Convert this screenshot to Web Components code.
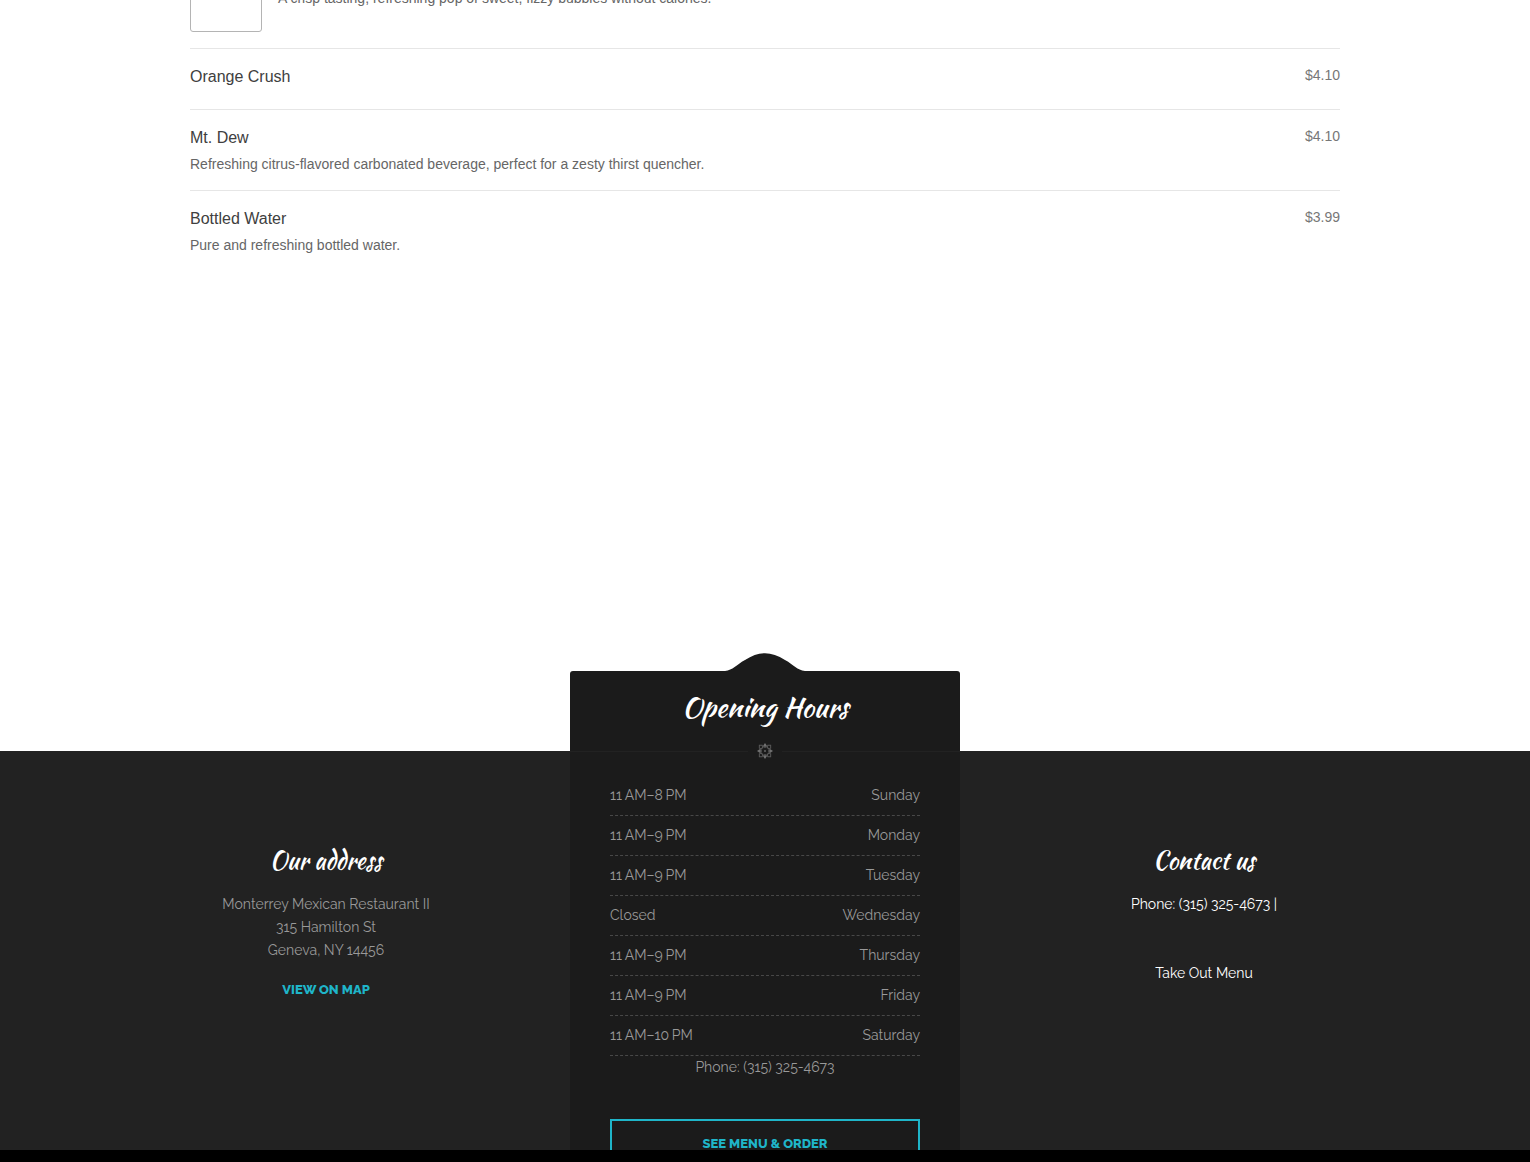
<!DOCTYPE html>
<html lang="en">
<head>
<meta charset="utf-8">
<title>Monterrey Mexican Restaurant II</title>
<style>
	body {
		margin: 0;
		height: 100vh;
		overflow: hidden;
		background: #fff;
	}
</style>
</head>
<body>
<restaurant-page></restaurant-page>

<script>
"use strict";

(function() {
	function attach(el, html) {
		const template = document.createElement('template');
		template.innerHTML = html;
		el.attachShadow({mode: "open"}).appendChild(template.content.cloneNode(true));
	}

	/* One dish or drink: name, description, price and an optional picture frame */
	class MenuItem extends HTMLElement {
		constructor() {
			super();
			attach(this, `
			<style>
				:host {
					display: flex;
					gap: 16px;
					padding: 16px 0;
					border-top: 1px solid #e6e6e6;
					font: 14px/20px "Liberation Sans", Arial, sans-serif;
					color: #666;
				}
				.thumb {
					display: none;
					box-sizing: border-box;
					width: 72px;
					height: 72px;
					border: 1px solid #b4b4b4;
					border-radius: 3px;
				}
				:host([framed]) .thumb {
					display: block;
				}
				.text {
					flex: 1;
				}
				h3 {
					margin: 0 0 4px;
					min-height: 24px;
					font-size: 16px;
					font-weight: normal;
					line-height: 24px;
					color: #404040;
				}
				.price {
					color: #777;
				}
			</style>
			<div class="thumb"></div>
			<div class="text">
				<h3><slot name="name"></slot></h3>
				<slot></slot>
			</div>
			<div class="price"><slot name="price"></slot></div>
			`);
		}
	}

	class DrinkMenu extends HTMLElement {
		constructor() {
			super();
			attach(this, `
			<style>
				:host {
					display: block;
					box-sizing: border-box;
					width: 100%;
					max-width: 1150px;
					margin: -57px auto 0;
					padding-bottom: 480px;
				}
			</style>
			<menu-item framed>A crisp tasting, refreshing pop of sweet, fizzy bubbles without calories.</menu-item>
			<menu-item>
				<span slot="name">Orange Crush</span>
				<span slot="price">$4.10</span>
			</menu-item>
			<menu-item>
				<span slot="name">Mt. Dew</span>
				<span slot="price">$4.10</span>
				Refreshing citrus-flavored carbonated beverage, perfect for a zesty thirst quencher.
			</menu-item>
			<menu-item>
				<span slot="name">Bottled Water</span>
				<span slot="price">$3.99</span>
				Pure and refreshing bottled water.
			</menu-item>
			`);
		}
	}

	const hours = [
		['11\u2009AM–8\u2009PM', 'Sunday'],
		['11\u2009AM–9\u2009PM', 'Monday'],
		['11\u2009AM–9\u2009PM', 'Tuesday'],
		['Closed', 'Wednesday'],
		['11\u2009AM–9\u2009PM', 'Thursday'],
		['11\u2009AM–9\u2009PM', 'Friday'],
		['11\u2009AM–10\u2009PM', 'Saturday']
	];

	class OpeningHours extends HTMLElement {
		constructor() {
			super();
			const rows = hours.map(([time, day]) => `<tr><td>${time}</td><th scope="row">${day}</th></tr>`).join('');
			attach(this, `
			<style>
				:host {
					display: block;
					position: relative;
					margin-top: -80px;
					padding: 16px 0 40px;
					border-radius: 3px;
					background: #1b1b1b;
					text-align: center;
				}
				.hump {
					position: absolute;
					left: 50%;
					bottom: 100%;
					transform: translateX(-50%);
					display: block;
				}
				h2 {
					margin: 0 0 16px;
					font: var(--heading-font);
					font-size: 28px;
					line-height: 40px;
					color: #fff;
				}
				.divider {
					display: flex;
					align-items: center;
					gap: 9px;
					margin-bottom: 17px;
				}
				.divider::before,
				.divider::after {
					content: "";
					flex: 1;
					height: 1px;
					background: #222;
				}
				.body {
					padding: 0 40px;
				}
				table, tbody {
					display: block;
				}
				/* flex rows keep the dashed line unbroken between the cells */
				tr {
					display: flex;
					justify-content: space-between;
					border-bottom: 1px dashed #484848;
					line-height: 39px;
				}
				td, th {
					padding: 0;
					font-weight: normal;
				}
				p {
					margin: 0 0 40px;
				}
				a {
					display: block;
					border: 2px solid #1fb5c9;
					font-size: 13px;
					font-weight: 800;
					line-height: 46px;
					color: #1fb5c9;
					text-decoration: none;
				}
			</style>
			<svg class="hump" width="80" height="18" viewBox="0 0 80 18" aria-hidden="true">
				<path d="M0 18C8 17 11 12 20 7C34-2 46-2 60 7C69 12 72 17 80 18Z" fill="#1b1b1b"/>
			</svg>
			<h2>Opening Hours</h2>
			<div class="divider">
				<svg width="16" height="16" viewBox="-8 -8 16 16" aria-hidden="true">
					<g fill="#707070">
						<path d="M0-8L2-5L0-3L-2-5Z"/>
						<path d="M0-8L2-5L0-3L-2-5Z" transform="rotate(90)"/>
						<path d="M0-8L2-5L0-3L-2-5Z" transform="rotate(180)"/>
						<path d="M0-8L2-5L0-3L-2-5Z" transform="rotate(270)"/>
					</g>
					<g fill="none" stroke="#585858">
						<path d="M0-8L2-6L1-4H-1L-2-6Z" transform="rotate(45)"/>
						<path d="M0-8L2-6L1-4H-1L-2-6Z" transform="rotate(135)"/>
						<path d="M0-8L2-6L1-4H-1L-2-6Z" transform="rotate(225)"/>
						<path d="M0-8L2-6L1-4H-1L-2-6Z" transform="rotate(315)"/>
						<circle r="4.5"/>
					</g>
					<circle r="1" fill="#666"/>
				</svg>
			</div>
			<div class="body">
				<table>${rows}</table>
				<p>Phone: (315) 325-4673</p>
				<a href="#menu">SEE MENU &amp; ORDER</a>
			</div>
			`);
		}
	}

	class FooterColumn extends HTMLElement {
		constructor() {
			super();
			attach(this, `
			<style>
				:host {
					display: block;
					padding-top: 92px;
					text-align: center;
				}
				h2 {
					margin: 0 0 14px;
					font: var(--heading-font);
					line-height: 36px;
					color: #fff;
				}
			</style>
			<h2><slot name="title"></slot></h2>
			<slot></slot>
			`);
		}
	}

	class SiteFooter extends HTMLElement {
		constructor() {
			super();
			attach(this, `
			<style>
				:host {
					--heading-font: 24px "Kaushan Script", cursive;
					display: block;
					background: #222;
					font: 14px/23px Raleway, Lato, sans-serif;
					color: #999;
				}
				.columns {
					display: grid;
					grid-template-columns: 1fr 390px 1fr;
					max-width: 1366px;
					margin: 0 auto;
				}
				p {
					margin: 0 0 16px;
				}
				a {
					color: #fff;
					text-decoration: none;
				}
				.contact p {
					margin-bottom: 46px;
					color: #fff;
				}
				.map {
					font-size: 13px;
					font-weight: 800;
					color: #1fb5c9;
				}
			</style>
			<div class="columns">
				<footer-column>
					<span slot="title">Our address</span>
					<p>Monterrey Mexican Restaurant II<br>315 Hamilton St<br>Geneva, NY 14456</p>
					<a class="map" href="#map">VIEW ON MAP</a>
				</footer-column>
				<opening-hours></opening-hours>
				<footer-column class="contact">
					<span slot="title">Contact us</span>
					<p>Phone: (315) 325-4673 |</p>
					<a href="#takeout">Take Out Menu</a>
				</footer-column>
			</div>
			`);
		}
	}

	class RestaurantPage extends HTMLElement {
		constructor() {
			super();
			attach(this, `
			<style>
				:host {
					display: flex;
					flex-direction: column;
					height: 100%;
				}
				main {
					flex: none;
				}
				main::before {
					content: "";
					display: table;
				}
				site-footer {
					flex: 1;
					min-height: 0;
				}
				.bar {
					position: fixed;
					left: 0;
					right: 0;
					bottom: 0;
					height: 12px;
					background: #000;
				}
			</style>
			<main><drink-menu></drink-menu></main>
			<site-footer></site-footer>
			<div class="bar"></div>
			`);
		}
	}

	customElements.define('menu-item', MenuItem);
	customElements.define('drink-menu', DrinkMenu);
	customElements.define('opening-hours', OpeningHours);
	customElements.define('footer-column', FooterColumn);
	customElements.define('site-footer', SiteFooter);
	customElements.define('restaurant-page', RestaurantPage);
})();
</script>
</body>
</html>
